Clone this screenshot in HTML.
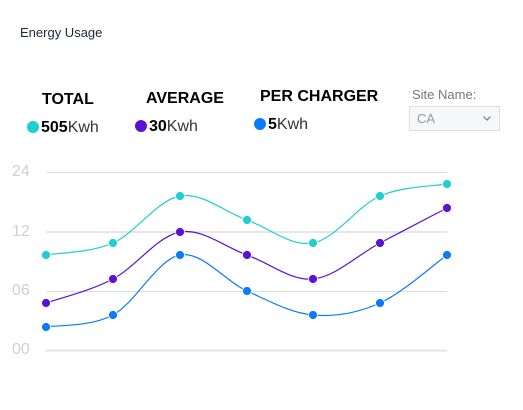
<!DOCTYPE html>
<html><head><style>
body{margin:0;width:523px;height:410px;background:#fff;font-family:"Liberation Sans",sans-serif;position:relative;overflow:hidden}
.a{position:absolute;white-space:nowrap}
.h{font-weight:bold;font-size:16px;color:#000}
.v{font-size:16px;color:#333}
.v b{color:#000}
.dot{display:inline-block;width:12px;height:12px;border-radius:50%;vertical-align:-1px;margin-right:2px}
.y{font-size:16px;color:#d0d0d0}
</style></head><body>
<div class="a" style="left:20px;top:25px;font-size:13px;color:#1e2738">Energy Usage</div>
<div class="a h" style="left:42px;top:91px">TOTAL</div>
<div class="a h" style="left:146px;top:90px">AVERAGE</div>
<div class="a h" style="left:260px;top:88px">PER CHARGER</div>
<div class="a v" style="left:27px;top:119px"><span class="dot" style="background:#1dcfcf"></span><b>505</b>Kwh</div>
<div class="a v" style="left:135px;top:118px"><span class="dot" style="background:#5a13d4"></span><b>30</b>Kwh</div>
<div class="a v" style="left:254px;top:116px"><span class="dot" style="background:#0a7cf7"></span><b>5</b>Kwh</div>
<div class="a" style="left:412px;top:87px;font-size:13px;color:#777">Site Name:</div>
<div class="a" style="left:409px;top:106px;width:91px;height:25px;border:1px solid #ddd;background:#f6f7f9;box-sizing:border-box">
<span style="position:absolute;left:7px;top:4px;font-size:13px;color:#999">CA</span>
<svg style="position:absolute;right:8px;top:9px" width="8" height="5"><path d="M0.5 0.5L4 4L7.5 0.5" fill="none" stroke="#777" stroke-width="1.2"/></svg>
</div>
<div class="a y" style="left:12px;top:163px">24</div>
<div class="a y" style="left:12px;top:223px">12</div>
<div class="a y" style="left:12px;top:282px">06</div>
<div class="a y" style="left:12px;top:341px">00</div>
<svg id="s" class="a" style="left:0;top:0" width="523" height="410">
<g stroke="#ddd" stroke-width="1"><line x1="46" y1="172.5" x2="447" y2="172.5"/><line x1="46" y1="232" x2="447" y2="232" stroke="#e6e6e6" stroke-width="2"/><line x1="46" y1="291.5" x2="447" y2="291.5"/><line x1="46" y1="350.5" x2="447" y2="350.5" stroke="#e6e6e6" stroke-width="2"/></g>
</svg>
<script>
var xs=[46,113,180,247,313,380,447];
var S=[["#1dcfcf",[255,243,196,220,243,196,184]],["#5a13d4",[303,279,232,255,279,243,208]],["#0a7cf7",[327,315,255,291,315,303,255]]];
var svg=document.getElementById('s'),h='';
S.forEach(function(s){var y=s[1],c=s[0];var P=xs.map(function(x,i){return[x,y[i]]});
var d='M'+P[0];for(var i=0;i<P.length-1;i++){var p0=P[i-1]||P[i],p1=P[i],p2=P[i+1],p3=P[i+2]||p2;
d+='C'+(p1[0]+(p2[0]-p0[0])/6)+','+(p1[1]+(p2[1]-p0[1])/6)+' '+(p2[0]-(p3[0]-p1[0])/6)+','+(p2[1]-(p3[1]-p1[1])/6)+' '+p2;}
h+='<path d="'+d+'" fill="none" stroke="'+c+'" stroke-width="1.2"/>';
P.forEach(function(p){h+='<circle cx="'+p[0]+'" cy="'+p[1]+'" r="4.5" fill="'+c+'" stroke="#fff" stroke-width="0.8"/>'});});
svg.insertAdjacentHTML('beforeend',h);
</script>
</body></html>
